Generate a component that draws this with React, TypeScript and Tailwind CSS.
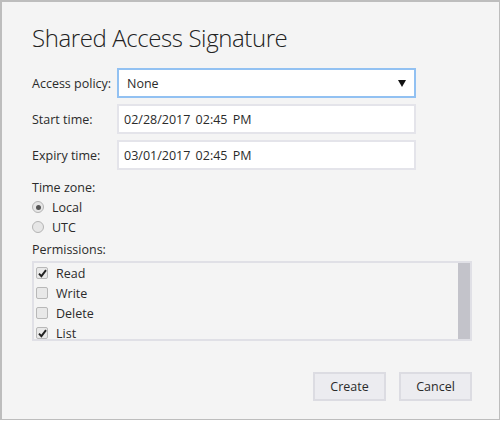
import React from "react";

const font = { fontFamily: '"Open Sans", "Noto Sans", sans-serif' };

function Radio({ checked, label }: { checked?: boolean; label: string }) {
  return (
    <div className="flex items-center h-[20px]">
      <span className="w-[12px] h-[12px] rounded-full border border-[#b4b4b4] bg-[#e6e6e6] flex items-center justify-center">
        {checked && <span className="w-[5px] h-[5px] rounded-full bg-[#555]" />}
      </span>
      <span className="ml-[8px] pt-[3px] text-[12.5px] text-[#2b2b2b]">{label}</span>
    </div>
  );
}

function Check({ checked, label }: { checked?: boolean; label: string }) {
  return (
    <div className="flex items-center h-[20px]">
      <span className="ml-[2px] w-[12px] h-[12px] rounded-[2px] border border-[#b8b8b8] bg-[#e8e8e8] flex items-center justify-center">
        {checked && (
          <svg width="9" height="9" viewBox="0 0 9 9">
            <path d="M1 4.6 L3.4 7.2 L8 1.2" stroke="#222" strokeWidth="1.9" fill="none" />
          </svg>
        )}
      </span>
      <span className="ml-[8px] pt-[3px] text-[12.5px] text-[#2b2b2b]">{label}</span>
    </div>
  );
}

export default function App() {
  return (
    <div
      style={font}
      className="w-[500px] h-[420px] bg-[#f4f4f4] border border-[#bdbdbd] border-l-2 border-t-2 pl-[30px] pr-[28px] flex flex-col text-[#2b2b2b]"
    >
      <div className="mt-[20px] text-[24px] leading-[32px] font-light tracking-[-0.4px] text-[#222]">Shared Access Signature</div>
      <div className="mt-[14px] flex items-center h-[30px]">
        <span className="w-[85px] pt-[3px] text-[12.5px]">Access policy:</span>
        <div className="w-[299px] h-[30px] bg-white border-2 border-[#92c1f2] flex items-center pl-[8px] pr-[8px] justify-between">
          <span className="pt-[3px] text-[12.5px]">None</span>
          <span className="w-0 h-0 border-l-[4px] border-r-[4px] border-t-[7px] border-l-transparent border-r-transparent border-t-[#111]" />
        </div>
      </div>
      <div className="mt-[6px] flex items-center h-[30px]">
        <span className="w-[85px] pt-[3px] text-[12.5px]">Start time:</span>
        <div className="w-[299px] h-[30px] bg-white border-2 border-[#e4e4ea] flex items-center pl-[5px]">
          <span className="pt-[3px] text-[12.5px] [word-spacing:2px]">02/28/2017 02:45 PM</span>
        </div>
      </div>
      <div className="mt-[6px] flex items-center h-[30px]">
        <span className="w-[85px] pt-[3px] text-[12.5px]">Expiry time:</span>
        <div className="w-[299px] h-[30px] bg-white border-2 border-[#e4e4ea] flex items-center pl-[5px]">
          <span className="pt-[3px] text-[12.5px] [word-spacing:2px]">03/01/2017 02:45 PM</span>
        </div>
      </div>
      <div className="mt-[7px] h-[20px] flex items-center pt-[3px] text-[12.5px]">Time zone:</div>
      <Radio checked label="Local" />
      <Radio label="UTC" />
      <div className="mt-[2px] h-[20px] flex items-center pt-[3px] text-[12.5px]">Permissions:</div>
      <div className="mt-[2px] w-[440px] h-[80px] border-2 border-[#e0e0e6] flex">
        <div className="flex-1 flex flex-col">
          <Check checked label="Read" />
          <Check label="Write" />
          <Check label="Delete" />
          <Check checked label="List" />
        </div>
        <div className="w-[12px] h-full bg-[#c3c3ca]" />
      </div>
      <div className="mt-[31px] flex justify-end gap-[13px] w-[440px]">
        <button className="w-[73px] h-[29px] bg-[#ececf0] border-2 border-[#dcdce2] pt-[2px] text-[12.5px] text-[#2b2b2b]">Create</button>
        <button className="w-[73px] h-[29px] bg-[#ececf0] border-2 border-[#dcdce2] pt-[2px] text-[12.5px] text-[#2b2b2b]">Cancel</button>
      </div>
    </div>
  );
}
